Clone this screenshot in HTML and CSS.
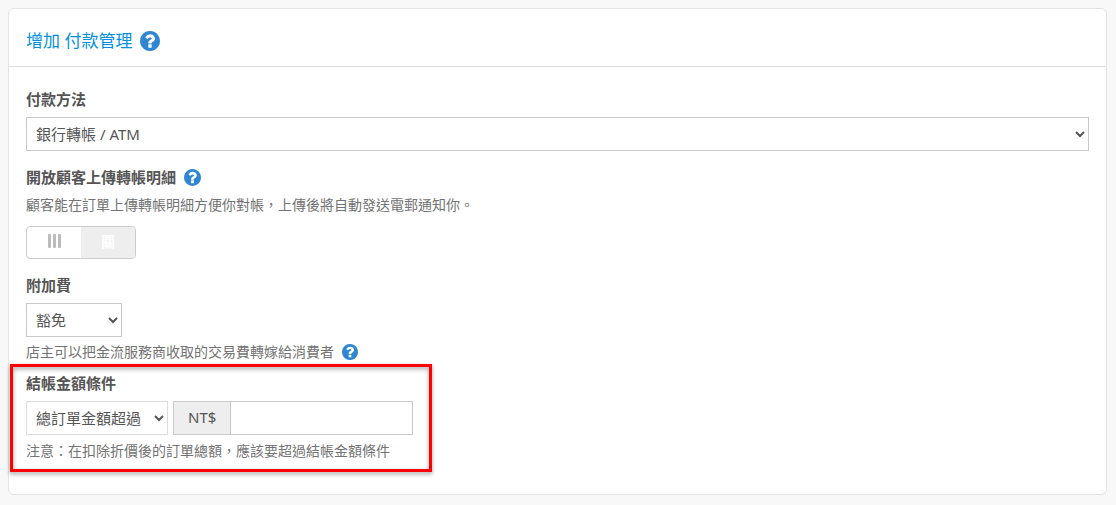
FILE: index.html
```html
<!DOCTYPE html>
<html lang="zh-Hant">
<head>
    <meta charset="UTF-8">
    <title>增加 付款管理</title>
    <meta name="viewport" content="width=device-width, initial-scale=1.0">
    <link rel="stylesheet" href="styles.css">
</head>
<body>
    <svg class="symbols" aria-hidden="true">
        <symbol id="help" viewBox="0 0 1536 1536">
            <path fill="currentColor" d="M896 1248v-192q0-14-9-23t-23-9H672q-14 0-23 9t-9 23v192q0 14 9 23t23 9h192q14 0 23-9t9-23zm256-672q0-88-55.500-163T958 297t-170-41q-243 0-371 213-15 24 8 42l132 100q7 6 19 6 16 0 25-12 53-68 86-92 34-24 86-24 48 0 85.500 26t37.500 59q0 38-20 61t-68 45q-63 28-115.500 86.500T640 892v36q0 14 9 23t23 9h192q14 0 23-9t9-23q0-19 21.500-49.500T972 829q32-18 49-28.500t46-35 44.500-48 28-60.500 12.500-81zm384 192q0 209-103 385.500T1153.500 1433 768 1536t-385.500-103T103 1153.500 0 768t103-385.500T382.500 103 768 0t385.500 103T1433 382.500 1536 768z"/>
        </symbol>
    </svg>

    <div class="panel">
        <div class="panel-heading">
            <h1>增加 付款管理</h1>
            <svg class="help-icon help-icon-lg"><use href="#help"/></svg>
        </div>

        <form class="panel-body">
            <div class="form-group">
                <label for="paymentMethod">付款方法</label>
                <select class="form-control" id="paymentMethod">
                    <option>銀行轉帳 / ATM</option>
                </select>
            </div>

            <div class="form-group">
                <div class="label-row">
                    <label for="uploadSwitch">開放顧客上傳轉帳明細</label>
                    <svg class="help-icon help-icon-md"><use href="#help"/></svg>
                </div>
                <p class="help-block">顧客能在訂單上傳轉帳明細方便你對帳，上傳後將自動發送電郵通知你。</p>
                <button type="button" class="switch" id="uploadSwitch" role="switch" aria-checked="false">
                    <span class="switch-handle"><i></i><i></i><i></i></span>
                    <span class="switch-off">關</span>
                </button>
            </div>

            <div class="form-group fee-group">
                <label for="fee">附加費</label>
                <select class="form-control fee-select" id="fee">
                    <option>豁免</option>
                </select>
                <div class="help-row">
                    <p class="help-block">店主可以把金流服務商收取的交易費轉嫁給消費者</p>
                    <svg class="help-icon"><use href="#help"/></svg>
                </div>
            </div>

            <div class="form-group condition-group">
                <label for="condition">結帳金額條件</label>
                <div class="condition-row">
                    <select class="form-control condition-select" id="condition">
                        <option>總訂單金額超過</option>
                    </select>
                    <div class="input-group">
                        <label class="input-addon" for="amount">NT$</label>
                        <input type="text" class="form-control" id="amount">
                    </div>
                </div>
                <p class="help-block">注意：在扣除折價後的訂單總額，應該要超過結帳金額條件</p>
                <div class="highlight"></div>
            </div>
        </form>
    </div>
</body>
</html>
```
FILE: styles.css
```css
* {
    box-sizing: border-box;
}

body {
    margin: 0;
    padding: 8px;
    background-color: #f8f8f8;
    font-family: "Noto Sans", "Noto Sans CJK TC", sans-serif;
    font-size: 15px;
    color: #555;
}

.symbols {
    display: none;
}

.panel {
    margin-right: 1px;
    background-color: #fff;
    border: 1px solid #e4e4e4;
    border-radius: 6px;
}

.panel-heading {
    display: flex;
    align-items: center;
    gap: 8px;
    padding: 19px 17px 13px;
    border-bottom: 1px solid #ddd;
}

.panel-heading h1 {
    margin: 0;
    font-size: 17px;
    font-weight: 400;
    line-height: 25px;
    color: #0090e3;
}

.help-icon {
    flex: none;
    width: 16px;
    height: 16px;
    color: #2f87d3;
}

.help-icon-md {
    width: 17px;
    height: 17px;
}

.help-icon-lg {
    width: 20px;
    height: 20px;
}

/* Form */
.panel-body {
    padding: 22px 17px 17px;
}

.form-group {
    margin-bottom: 16px;
}

label {
    display: block;
    margin-bottom: 8px;
    font-weight: 700;
    line-height: 20px;
}

.label-row,
.help-row {
    display: flex;
    align-items: center;
    gap: 8px;
}

.label-row {
    margin-bottom: 8px;
}

.label-row label {
    margin-bottom: 0;
}

.form-control {
    display: block;
    width: 100%;
    height: 34px;
    margin: 0;
    padding: 0 5px;
    background-color: #fff;
    border: 1px solid #c8c8c8;
    border-radius: 0;
    font: inherit;
    color: #555;
}

.help-block {
    margin: 0;
    font-size: 14px;
    line-height: 20px;
    color: #737373;
}

/* On/off switch */
.switch {
    display: flex;
    width: 110px;
    height: 33px;
    margin-top: 11px;
    padding: 0;
    overflow: hidden;
    background-color: #fff;
    border: 1px solid #ccc;
    border-radius: 4px;
    font: inherit;
}

.switch-handle,
.switch-off {
    display: flex;
    flex: 1;
    align-items: center;
    justify-content: center;
    height: 100%;
    padding-bottom: 3px;
}

.switch-handle {
    gap: 2px;
}

.switch-handle i {
    width: 3px;
    height: 14px;
    background-color: #bbb;
    border-radius: 1px;
}

.switch-off {
    background-color: #eee;
    font-size: 14px;
    font-weight: 700;
    color: #fff;
}

.fee-group {
    margin-bottom: 11px;
}

.fee-select {
    width: 96px;
}

.fee-group .help-row {
    margin-top: 5px;
}

/* Checkout amount condition */
.condition-group {
    position: relative;
}

.condition-row {
    display: flex;
    gap: 5px;
    margin-bottom: 6px;
}

.condition-select {
    width: 142px;
    border-color: #ddd;
}

.input-group {
    display: flex;
    width: 240px;
}

.input-addon {
    flex: none;
    margin: 0;
    padding: 0 14px;
    background-color: #eee;
    border: 1px solid #ccc;
    border-right: 0;
    font-weight: 400;
    line-height: 30px;
}

.highlight {
    position: absolute;
    top: -9px;
    left: -16px;
    width: 422px;
    height: 108px;
    border: 3px solid #f00;
    filter: drop-shadow(0 2px 2px rgba(0, 0, 0, 0.4));
    pointer-events: none;
}
```
